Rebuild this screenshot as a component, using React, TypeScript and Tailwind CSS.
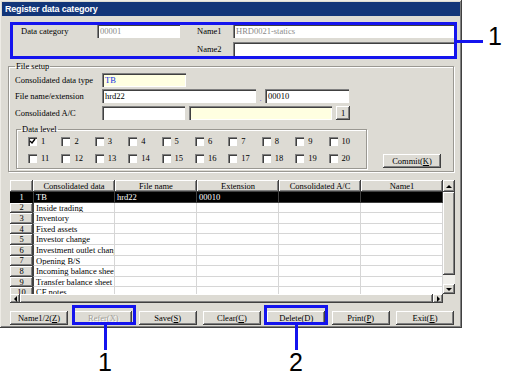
import React from "react";

const raised =
  "bg-[#dddbd4] shadow-[inset_-1px_-1px_0_#404040,inset_1px_1px_0_#ffffff,inset_-2px_-2px_0_#808080]";
const sunken =
  "shadow-[inset_1px_1px_0_#808080,inset_2px_2px_0_#404040,inset_-1px_-1px_0_#ffffff]";
const etched = "border border-[#9a9892] shadow-[1px_1px_0_#ffffff,inset_1px_1px_0_#ffffff]";

const rows = [
  ["TB", "hrd22", "00010"],
  ["Inside trading", "", ""],
  ["Inventory", "", ""],
  ["Fixed assets", "", ""],
  ["Investor change", "", ""],
  ["Investment outlet change", "", ""],
  ["Opening B/S", "", ""],
  ["Incoming balance sheet", "", ""],
  ["Transfer balance sheet", "", ""],
  ["CF notes", "", ""],
];

function Field({ w, value = "", tone = "white", color = "text-black" }: { w: string; value?: string; tone?: "white" | "yellow"; color?: string }) {
  return (
    <div
      className={`${w} h-[14px] ${tone === "yellow" ? "bg-[#ffffe1]" : "bg-white"} ${sunken} ${color} pl-[3px] pt-[2px] leading-[10px] overflow-hidden whitespace-nowrap`}
    >
      {value}
    </div>
  );
}

function Check({ n, on = false }: { n: number; on?: boolean }) {
  return (
    <div className="w-[33.4px] flex items-center shrink-0">
      <div className={`w-[9px] h-[9px] bg-white ${sunken} flex items-center justify-center`}>
        {on && (
          <svg width="7" height="7" viewBox="0 0 7 7">
            <path d="M1 3 L3 5 L6 1" stroke="#000" strokeWidth="1.4" fill="none" />
          </svg>
        )}
      </div>
      <span className="ml-[4px] leading-[10px]">{n}</span>
    </div>
  );
}

function Btn({ label, u, disabled = false, w = "w-[58px]" }: { label: string; u: string; disabled?: boolean; w?: string }) {
  return (
    <div
      className={`${w} h-[14px] ${raised} flex items-center justify-center leading-[10px] ${
        disabled ? "text-[#a09e98] [text-shadow:1px_1px_0_#fff]" : "text-black"
      }`}
    >
      {label}(<span className="underline">{u}</span>)
    </div>
  );
}

function Arrow({ dir }: { dir: "up" | "down" | "left" | "right" }) {
  const d = {
    up: "M1 4 L4 1 L7 4 Z",
    down: "M1 1 L4 4 L7 1 Z",
    left: "M4 0 L1 3 L4 6 Z",
    right: "M1 0 L4 3 L1 6 Z",
  }[dir];
  const vert = dir === "up" || dir === "down";
  return (
    <svg width={vert ? 8 : 5} height={vert ? 5 : 6} viewBox={vert ? "0 0 8 5" : "0 0 5 6"}>
      <path d={d} fill="#000" />
    </svg>
  );
}

export default function App() {
  return (
    <div className="w-[515px] h-[382px] bg-white relative overflow-hidden font-['Liberation_Serif',serif] text-[8.5px] text-black">
      {/* dialog window */}
      <div className="w-[462px] h-[328px] bg-[#dddbd4] flex flex-col shadow-[inset_-1px_-1px_0_#404040,inset_1px_1px_0_#eeece6,inset_-2px_-2px_0_#808080]">
        <div className="mx-[2px] mt-[2px] h-[14px] bg-[#123579] text-white font-['Liberation_Sans',sans-serif] font-bold text-[9px] tracking-[-0.2px] leading-[14px] pl-[3px]">
          Register data category
        </div>

        {/* header fields */}
        <div className="mt-[8px] flex items-center pl-[21px]">
          <span className="w-[76px]">Data category</span>
          <Field w="w-[83px]" value="00001" color="text-[#8a8a8a]" />
          <span className="ml-[17px] w-[36px]">Name1</span>
          <Field w="w-[222px]" value="HRD0021-statics" color="text-[#8a8a8a]" />
        </div>
        <div className="mt-[4px] flex items-center pl-[197px]">
          <span className="w-[36px]">Name2</span>
          <Field w="w-[222px]" />
        </div>

        {/* file setup */}
        <fieldset className={`mt-[5px] mx-[8px] ${etched} px-0 pb-[2px]`}>
          <legend className="ml-[6px] px-[1px] leading-[10px]">File setup</legend>
          <div className="pl-[6px]">
            <div className="mt-[2px] flex items-center">
              <span className="w-[87px]">Consolidated data type</span>
              <Field w="w-[84px]" value="TB" tone="yellow" color="text-[#1030e0]" />
            </div>
            <div className="mt-[2px] flex items-center">
              <span className="w-[87px]">File name/extension</span>
              <Field w="w-[154px]" value="hrd22" />
              <span className="w-[9px] text-center text-[#6060d0] leading-[10px] pt-[3px]">.</span>
              <Field w="w-[84px]" value="00010" />
            </div>
            <div className="mt-[3px] flex items-center">
              <span className="w-[87px]">Consolidated A/C</span>
              <Field w="w-[83px]" />
              <div className="ml-[4px]">
                <Field w="w-[143px]" tone="yellow" />
              </div>
              <div className={`ml-[4px] w-[14px] h-[14px] ${raised} flex items-center justify-center leading-[10px]`}>1</div>
            </div>
            <div className="mt-[4px] flex items-end">
              <fieldset className={`ml-[1px] w-[351px] ${etched} px-0 pb-[5px]`}>
                <legend className="ml-[4px] px-[1px] leading-[10px]">Data level</legend>
                <div className="pl-[11px]">
                  <div className="mt-[2px] flex">
                    {[1, 2, 3, 4, 5, 6, 7, 8, 9, 10].map((n) => (
                      <Check key={n} n={n} on={n === 1} />
                    ))}
                  </div>
                  <div className="mt-[7px] flex">
                    {[11, 12, 13, 14, 15, 16, 17, 18, 19, 20].map((n) => (
                      <Check key={n} n={n} />
                    ))}
                  </div>
                </div>
              </fieldset>
              <div className="ml-[16px] mb-[1px]">
                <Btn label="Commit" u="K" />
              </div>
            </div>
          </div>
        </fieldset>

        {/* grid */}
        <div className={`mt-[8px] ml-[10px] w-[445px] h-[123px] bg-white flex flex-col shadow-[inset_1px_1px_0_#808080,inset_-1px_-1px_0_#ffffff]`}>
          <div className="flex h-[114px]">
            <div className="w-[433px] flex flex-col overflow-hidden">
              <div className="flex h-[12px] shrink-0">
                <div className={`w-[23px] h-[12px] ${raised}`} />
                {["Consolidated data", "File name", "Extension", "Consolidated A/C", "Name1"].map((h) => (
                  <div key={h} className={`w-[82px] h-[12px] ${raised} flex items-center justify-center leading-[10px]`}>
                    {h}
                  </div>
                ))}
              </div>
              {rows.map((r, i) => {
                const sel = i === 0;
                return (
                  <div key={i} className="flex h-[10.6px] shrink-0">
                    <div
                      className={`w-[23px] h-full flex items-center justify-center leading-[9px] ${
                        sel ? "bg-black text-white" : `${raised} text-black`
                      }`}
                    >
                      {i + 1}
                    </div>
                    {[r[0], r[1], r[2], "", ""].map((c, j) => (
                      <div
                        key={j}
                        className={`w-[82px] h-full pl-[2px] leading-[10px] overflow-hidden whitespace-nowrap border-r border-b ${
                          sel ? "bg-black text-white border-[#404040]" : "border-[#d6d6d6]"
                        } ${j === 0 ? "border-l border-l-[#404040]" : ""}`}
                      >
                        {c}
                      </div>
                    ))}
                  </div>
                );
              })}
            </div>
            {/* vertical scrollbar */}
            <div className="w-[12px] flex flex-col">
              <div className={`h-[12px] ${raised} flex items-center justify-center`}>
                <Arrow dir="up" />
              </div>
              <div className={`h-[83px] ${raised}`} />
              <div className="h-[9px] bg-[#f1f0ec]" />
              <div className={`h-[10px] ${raised} flex items-center justify-center`}>
                <Arrow dir="down" />
              </div>
            </div>
          </div>
          {/* horizontal scrollbar */}
          <div className="flex h-[9px]">
            <div className={`w-[10px] ${raised} flex items-center justify-center`}>
              <Arrow dir="left" />
            </div>
            <div className={`w-[413px] ${raised}`} />
            <div className={`w-[10px] ${raised} flex items-center justify-center`}>
              <Arrow dir="right" />
            </div>
            <div className="w-[12px] bg-[#dddbd4]" />
          </div>
        </div>

        {/* buttons */}
        <div className="mt-[8px] ml-[10px] w-[444px] flex justify-between">
          <Btn label="Name1/2" u="Z" />
          <Btn label="Refer" u="X" disabled />
          <Btn label="Save" u="S" />
          <Btn label="Clear" u="C" />
          <Btn label="Delete" u="D" />
          <Btn label="Print" u="P" />
          <Btn label="Exit" u="E" />
        </div>
      </div>

      {/* annotations */}
      <div className="absolute left-[10px] top-[22px] w-[447px] h-[37px] border-[3px] border-[#1414ee]" />
      <div className="absolute left-[457px] top-[40px] w-[26px] h-[3px] bg-[#1414ee]" />
      <div className="absolute left-[488px] top-[24px] font-['Liberation_Sans',sans-serif] text-[25px] leading-[25px]">1</div>

      <div className="absolute left-[72px] top-[305px] w-[64px] h-[20px] border-[3px] border-[#1414ee]" />
      <div className="absolute left-[104px] top-[325px] w-[3px] h-[25px] bg-[#1414ee]" />
      <div className="absolute left-[98px] top-[350px] font-['Liberation_Sans',sans-serif] text-[25px] leading-[25px]">1</div>

      <div className="absolute left-[264px] top-[305px] w-[64px] h-[20px] border-[3px] border-[#1414ee]" />
      <div className="absolute left-[295px] top-[325px] w-[3px] h-[25px] bg-[#1414ee]" />
      <div className="absolute left-[289px] top-[350px] font-['Liberation_Sans',sans-serif] text-[25px] leading-[25px]">2</div>
    </div>
  );
}
